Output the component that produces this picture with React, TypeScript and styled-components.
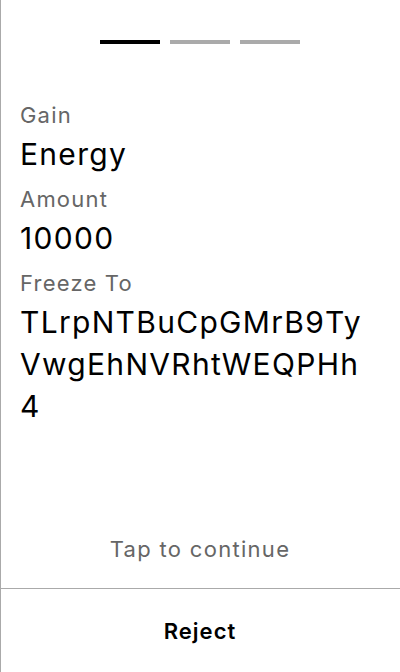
import React from "react";
import styled, { createGlobalStyle } from "styled-components";

const Global = createGlobalStyle`
  html, body { margin: 0; padding: 0; background: #fff; }
  body { font-family: Inter, "Noto Sans", sans-serif; }
`;

const Page = styled.div`
  box-sizing: border-box;
  width: 400px;
  height: 672px;
  border-left: 1px solid #aaaaaa;
  display: flex;
  flex-direction: column;
  background: #fff;
`;

const Steps = styled.div`
  display: flex;
  justify-content: center;
  gap: 10px;
  padding-top: 40px;
  margin-left: -1px;
`;

const Step = styled.div<{ $active?: boolean }>`
  width: 60px;
  height: 4px;
  background: ${(p) => (p.$active ? "#000" : "#aaaaaa")};
`;

const Content = styled.div`
  flex: 1;
  padding: 59px 24px 0 19px;
  display: flex;
  flex-direction: column;
`;

const Label = styled.div`
  font-size: 22px;
  line-height: 24px;
  letter-spacing: 1.2px;
  color: #666666;
  margin-bottom: 6px;
`;

const Value = styled.div`
  font-size: 30px;
  line-height: 42px;
  letter-spacing: 1.3px;
  color: #000;
  word-break: break-all;
  margin-bottom: 12px;
`;

const Hint = styled.div`
  text-align: center;
  font-size: 22px;
  line-height: 24px;
  letter-spacing: 1.3px;
  color: #666666;
  padding-bottom: 27px;
  margin-left: -1px;
`;

const Footer = styled.button`
  all: unset;
  box-sizing: border-box;
  border-top: 1px solid #aaaaaa;
  height: 84px;
  display: flex;
  align-items: center;
  justify-content: center;
  font-family: Inter, "Noto Sans", sans-serif;
  font-size: 22px;
  font-weight: 600;
  letter-spacing: 1px;
  color: #000;
  margin-left: -1px;
`;

const fields = [
  { label: "Gain", value: "Energy" },
  { label: "Amount", value: "10000" },
  { label: "Freeze To", value: "TLrpNTBuCpGMrB9TyVwgEhNVRhtWEQPHh4" },
];

export default function App() {
  return (
    <>
      <Global />
      <Page>
        <Steps>
          <Step $active />
          <Step />
          <Step />
        </Steps>
        <Content>
          {fields.map((f) => (
            <React.Fragment key={f.label}>
              <Label>{f.label}</Label>
              <Value>{f.value}</Value>
            </React.Fragment>
          ))}
        </Content>
        <Hint>Tap to continue</Hint>
        <Footer>Reject</Footer>
      </Page>
    </>
  );
}
